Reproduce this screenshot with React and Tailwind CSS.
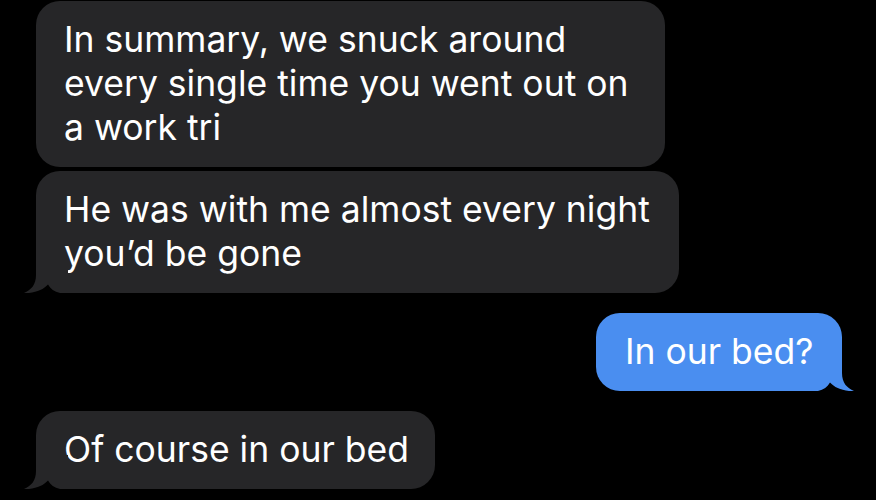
import React from "react";

const GREY = "#262628";
const BLUE = "#4a8ef0";

function LeftTail({ color }) {
  return (
    <svg
      className="absolute bottom-0 left-[-12px]"
      width="44"
      height="34"
      viewBox="0 0 44 34"
    >
      <path d="M12 0 L12 16 C12 26 7 31 0 34 L44 34 L44 0 Z" fill={color} />
      <path d="M-1 34.5 C11 34 19 31 24 25.5 C27 31 32 34 40 34.5 Z" fill="#000" />
    </svg>
  );
}

function RightTail({ color }) {
  return (
    <svg
      className="absolute bottom-0 right-[-12px]"
      width="44"
      height="34"
      viewBox="0 0 44 34"
    >
      <g transform="translate(44 0) scale(-1 1)">
        <path d="M12 0 L12 16 C12 26 7 31 0 34 L44 34 L44 0 Z" fill={color} />
        <path d="M-1 34.5 C11 34 19 31 24 25.5 C27 31 32 34 40 34.5 Z" fill="#000" />
      </g>
    </svg>
  );
}

function Received({ lines, width, tail, className = "" }) {
  return (
    <div
      className={`relative rounded-[24px] bg-[#262628] pl-[28px] py-[17px] text-white ${className}`}
      style={{ width }}
    >
      {lines.map((l, i) => (
        <div key={i} className="whitespace-nowrap">
          {l}
        </div>
      ))}
      {tail && <LeftTail color={GREY} />}
    </div>
  );
}

export default function App() {
  return (
    <div
      className="w-[876px] h-[500px] overflow-hidden bg-black flex flex-col pt-[1px] pl-[36px] pr-[34px] text-[35.5px] leading-[44px] tracking-normal font-[380]"
      style={{ fontFamily: "Inter, 'Noto Sans', sans-serif" }}
    >
      <Received
        width={629}
        lines={[
          "In summary, we snuck around",
          "every single time you went out on",
          "a work tri",
        ]}
      />
      <Received
        className="mt-[4px]"
        width={643}
        tail
        lines={["He was with me almost every night", "you\u2019d be gone"]}
      />
      <div className="mt-[20px] flex justify-end">
        <div className="relative w-[246px] rounded-[24px] bg-[#4a8ef0] pl-[29px] py-[17px] text-white whitespace-nowrap">
          In our bed?
          <RightTail color={BLUE} />
        </div>
      </div>
      <Received
        className="mt-[20px]"
        width={399}
        tail
        lines={["Of course in our bed"]}
      />
    </div>
  );
}
